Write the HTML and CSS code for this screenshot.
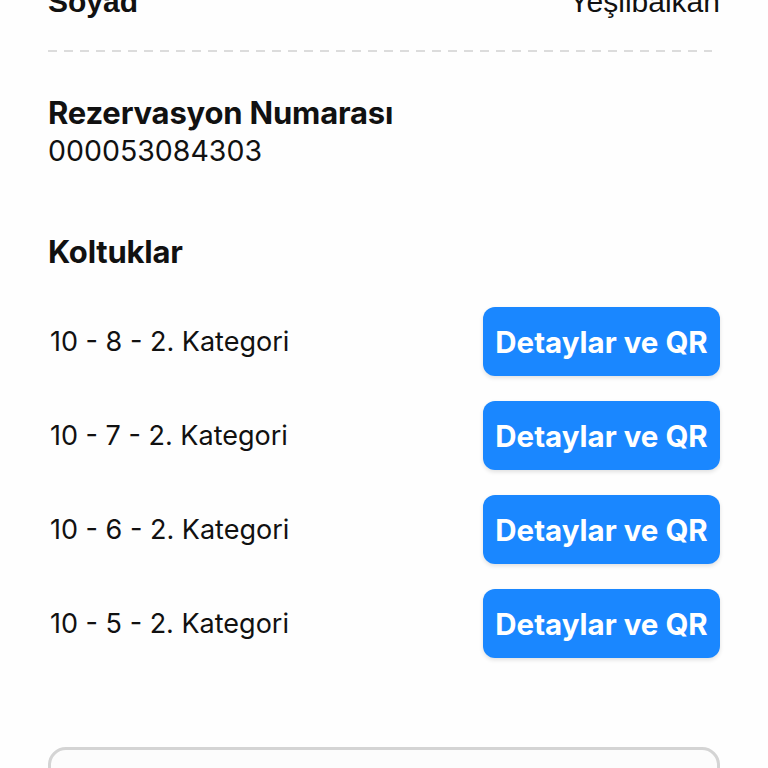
FILE: index.html
```html
<!DOCTYPE html>
<html lang="tr">
<head>
  <meta charset="UTF-8" />
  <meta name="viewport" content="width=device-width, initial-scale=1.0"/>
  <title>Bilet Detayı</title>
  <link rel="stylesheet" href="styles.css">
</head>
<body>

<main class="ticket">
  <div class="info-row">
    <span class="label">Soyad</span>
    <span class="value">Yeşilbalkan</span>
  </div>

  <div class="divider"></div>

  <section class="block">
    <h2>Rezervasyon Numarası</h2>
    <p class="pnr">000053084303</p>
  </section>

  <section class="block seats">
    <h2>Koltuklar</h2>
    <ul class="seat-list">
      <li class="seat">
        <span>10 - 8 - 2. Kategori</span>
        <button>Detaylar ve QR</button>
      </li>
      <li class="seat">
        <span>10 - 7 - 2. Kategori</span>
        <button>Detaylar ve QR</button>
      </li>
      <li class="seat">
        <span>10 - 6 - 2. Kategori</span>
        <button>Detaylar ve QR</button>
      </li>
      <li class="seat">
        <span>10 - 5 - 2. Kategori</span>
        <button>Detaylar ve QR</button>
      </li>
    </ul>
  </section>

  <div class="card"></div>
</main>

</body>
</html>
```

FILE: styles.css
```css
body {
  font-family: Inter, 'Noto Sans', sans-serif;
  margin: 0;
  background: #fefefe;
  color: #111;
  overflow: hidden;
}
.ticket {
  margin-top: -15px;
  padding: 0 48px;
}
.info-row {
  display: flex;
  justify-content: space-between;
  font-family: 'Liberation Sans', Arial, sans-serif;
  font-size: 30px;
  line-height: 34px;
}
.info-row .label {
  font-weight: 700;
}
.divider {
  margin: 31px 8px 0 0;
  height: 2px;
  background: repeating-linear-gradient(90deg, #dcdcdc 0 9px, transparent 9px 16px);
}
.block h2 {
  margin: 0;
  font-size: 31px;
  line-height: 34px;
  font-weight: 700;
  letter-spacing: -0.2px;
}
.block {
  margin-top: 44px;
}
.pnr {
  margin: 4px 0 0;
  font-size: 28.5px;
  line-height: 34px;
}
.seats {
  margin-top: 67px;
}
.seat-list {
  list-style: none;
  margin: 38px 0 0;
  padding: 0;
  display: flex;
  flex-direction: column;
  gap: 25px;
}
.seat {
  display: flex;
  justify-content: space-between;
  align-items: center;
  padding-left: 2px;
  font-size: 27px;
}
.seat button {
  font-family: inherit;
  font-size: 29.5px;
  font-weight: 700;
  color: #fff;
  background: #1a87ff;
  border: none;
  border-radius: 12px;
  height: 69px;
  width: 237px;
  padding: 0;
  box-shadow: 0 2px 4px rgba(0,0,0,0.12);
  cursor: pointer;
}
.card {
  margin-top: 89px;
  height: 60px;
  border: 3px solid #d4d4d4;
  border-radius: 18px;
  background: #fcfcfc;
}
```
